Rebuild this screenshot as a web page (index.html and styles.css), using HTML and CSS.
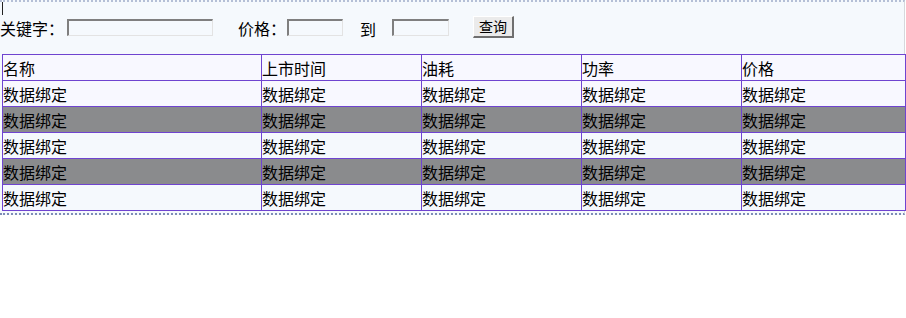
FILE: index.html
```html
<!DOCTYPE html>
<html lang="zh-CN">
<head>
  <meta charset="UTF-8">
  <title>车辆查询</title>
  <link rel="stylesheet" href="styles.css">
</head>
<body>
  <div class="page">
    <div class="caret"></div>
    <div class="search-bar">
      <label class="label">关键字：</label>
      <input class="field field-keyword" type="text">
      <label class="label label-price">价格：</label>
      <input class="field field-price" type="text">
      <span class="label label-to">到</span>
      <input class="field field-price2" type="text">
      <button class="search-button">查询</button>
    </div>

    <table class="data-table">
      <tr>
        <td class="col-name">名称</td>
        <td class="col-mid">上市时间</td>
        <td class="col-mid">油耗</td>
        <td class="col-mid">功率</td>
        <td>价格</td>
      </tr>
      <tr>
        <td>数据绑定</td><td>数据绑定</td><td>数据绑定</td><td>数据绑定</td><td>数据绑定</td>
      </tr>
      <tr class="alt">
        <td>数据绑定</td><td>数据绑定</td><td>数据绑定</td><td>数据绑定</td><td>数据绑定</td>
      </tr>
      <tr>
        <td>数据绑定</td><td>数据绑定</td><td>数据绑定</td><td>数据绑定</td><td>数据绑定</td>
      </tr>
      <tr class="alt">
        <td>数据绑定</td><td>数据绑定</td><td>数据绑定</td><td>数据绑定</td><td>数据绑定</td>
      </tr>
      <tr>
        <td>数据绑定</td><td>数据绑定</td><td>数据绑定</td><td>数据绑定</td><td>数据绑定</td>
      </tr>
    </table>
  </div>
</body>
</html>
```

FILE: styles.css
```css
body {
  margin: 0;
  background: #ffffff;
  font-family: "Noto Sans CJK SC", "DejaVu Sans", sans-serif;
  font-size: 16px;
  color: #000000;
}

.page {
  width: 904px;
  background: #f5f9fd;
  border-top: 2px dotted #b4bfd6;
  border-bottom: 2px dotted #7d8cb6;
  border-right: 1px solid #d6d8dc;
  padding-bottom: 2px;
}

.caret {
  width: 1px;
  height: 13px;
  margin-left: 2px;
  background: #222222;
}

.search-bar {
  display: flex;
  align-items: center;
  height: 24px;
}

.label {
  line-height: 24px;
  margin-top: 1px;
}

.label-price {
  margin-left: 25px;
}

.label-to {
  margin-left: 17px;
  margin-right: 16px;
  margin-top: 3px;
}

.field {
  box-sizing: border-box;
  height: 17px;
  margin: 0;
  padding: 0;
  background: transparent;
  border-top: 2px solid #7f7f7f;
  border-left: 2px solid #7f7f7f;
  border-right: 1px solid #e3e3e3;
  border-bottom: 1px solid #e3e3e3;
  margin-top: 1px;
}

.field-keyword {
  width: 146px;
  margin-left: 3px;
}

.field-price {
  width: 56px;
  margin-left: 1px;
}

.field-price2 {
  width: 57px;
}

.search-button {
  box-sizing: border-box;
  width: 41px;
  height: 22px;
  margin-left: 24px;
  margin-top: -1px;
  padding: 0;
  font-family: inherit;
  font-size: 14px;
  line-height: 18px;
  background: #ebebeb;
  border-top: 1px solid #ffffff;
  border-left: 1px solid #ffffff;
  border-right: 2px solid #6f6f6f;
  border-bottom: 2px solid #6f6f6f;
}

.data-table {
  width: 904px;
  margin: 15px 0 0 2px;
  border-collapse: collapse;
  background: #f8f8ff;
}

.data-table td {
  height: 25px;
  padding: 0;
  border: 1px solid #6f44d0;
  vertical-align: middle;
  white-space: nowrap;
}

.data-table .col-name {
  width: 258px;
}

.data-table .col-mid {
  width: 159px;
}

.data-table tr:nth-child(4),
.data-table tr:nth-child(6) {
  background: #f5f9fd;
}

.data-table tr.alt {
  background: #8a8b8d;
}
```
